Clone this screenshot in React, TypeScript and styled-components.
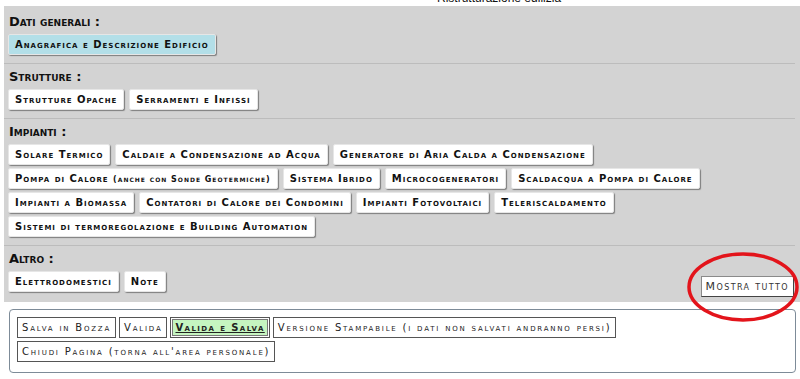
import styled, { createGlobalStyle } from 'styled-components'

const GlobalStyle = createGlobalStyle`
    html, body {
        margin: 0;
        padding: 0;
        background: #ffffff;
        font-family: Verdana, "DejaVu Sans", sans-serif;
    }
`

const Page = styled.div`
    position: relative;
    width: 800px;
    height: 379px;
    overflow: hidden;
`

const TitleStrip = styled.div`
    height: 6px;
    overflow: hidden;
    padding-left: 437px;
`

const TitleText = styled.div`
    margin-top: -8px;
    font-family: "Liberation Sans", Arial, sans-serif;
    font-size: 12px;
    line-height: 13px;
    color: #111;
`

const Panel = styled.div`
    margin-left: 4px;
    background: #d3d3d3;
`

const Section = styled.div`
    margin-right: 5px;
    border-top: ${p => (p.$first ? 'none' : '1px solid #bcbcbc')};
    padding: ${p => (p.$first ? '8px' : '5px')} 0 ${p => (p.$last ? '5px' : '8px')} 4px;
    display: flex;
    flex-direction: column;
    gap: 5px;
`

const Heading = styled.div`
    font-weight: bold;
    font-variant: small-caps;
    font-size: 13px;
    line-height: 15px;
    color: #111;
    padding-left: 1px;
`

const Buttons = styled.div`
    display: flex;
    flex-wrap: wrap;
    align-items: flex-start;
    gap: 3px 5px;
`

const NavButton = styled.button`
    height: 21px;
    padding: 0 6px;
    border: 1px solid #e6e6e6;
    border-radius: 2px;
    background: ${p => (p.$active ? '#b3dfe8' : '#ffffff')};
    box-shadow: 1px 1px 1px #7e7e7e;
    font-family: Verdana, "DejaVu Sans", sans-serif;
    font-weight: bold;
    font-variant: small-caps;
    font-size: 10px;
    letter-spacing: 1px;
    color: #111;
    cursor: pointer;
    white-space: nowrap;
`

const Small = styled.span`
    font-size: 8px;
`

const AltroRow = styled.div`
    display: flex;
    justify-content: space-between;
    align-items: flex-start;
`

const ShowAll = styled.button`
    margin-top: 5px;
    margin-right: 1px;
    height: 21px;
    padding: 0 4px;
    background: #ffffff;
    border: 1px solid #8a8a8a;
    border-right-color: #444;
    border-bottom-color: #444;
    font-family: Verdana, "DejaVu Sans", sans-serif;
    font-variant: small-caps;
    font-size: 11px;
    letter-spacing: 1.4px;
    color: #333;
`

const Highlight = styled.svg`
    position: absolute;
    left: 686px;
    top: 251px;
    width: 114px;
    height: 72px;
    pointer-events: none;
`

const ActionBox = styled.div`
    margin: 7px 4px 0 9px;
    height: 48px;
    padding: 7px 7px;
    border: 1px solid #7d8b98;
    border-radius: 4px;
    background: #ffffff;
    display: flex;
    flex-wrap: wrap;
    align-content: flex-start;
    gap: 3px 3px;
`

const ActionButton = styled.button`
    height: 21px;
    padding: 0 4px;
    background: ${p => (p.$primary ? '#c5f5c0' : '#ffffff')};
    border: 1px solid #555;
    box-shadow: ${p => (p.$primary ? 'inset 0 0 0 1px #ffffff, inset 0 0 0 2px #777' : 'none')};
    font-family: Verdana, "DejaVu Sans", sans-serif;
    font-variant: small-caps;
    font-weight: ${p => (p.$primary ? 'bold' : 'normal')};
    text-decoration: ${p => (p.$primary ? 'underline' : 'none')};
    font-size: 10px;
    letter-spacing: ${p => (p.$primary ? '1.4px' : '1.8px')};
    color: #222;
    white-space: nowrap;
`

const App = () => {
    return (
        <Page>
            <GlobalStyle />
            <TitleStrip>
                <TitleText>Ristrutturazione edilizia</TitleText>
            </TitleStrip>
            <Panel>
                <Section $first>
                    <Heading>Dati generali :</Heading>
                    <Buttons>
                        <NavButton $active>Anagrafica e Descrizione Edificio</NavButton>
                    </Buttons>
                </Section>
                <Section>
                    <Heading>Strutture :</Heading>
                    <Buttons>
                        <NavButton>Strutture Opache</NavButton>
                        <NavButton>Serramenti e Infissi</NavButton>
                    </Buttons>
                </Section>
                <Section>
                    <Heading>Impianti :</Heading>
                    <Buttons>
                        <NavButton>Solare Termico</NavButton>
                        <NavButton>Caldaie a Condensazione ad Acqua</NavButton>
                        <NavButton>Generatore di Aria Calda a Condensazione</NavButton>
                        <NavButton>Pompa di Calore <Small>(anche con Sonde Geotermiche)</Small></NavButton>
                        <NavButton>Sistema Ibrido</NavButton>
                        <NavButton>Microcogeneratori</NavButton>
                        <NavButton>Scaldacqua a Pompa di Calore</NavButton>
                        <NavButton>Impianti a Biomassa</NavButton>
                        <NavButton>Contatori di Calore dei Condomini</NavButton>
                        <NavButton>Impianti Fotovoltaici</NavButton>
                        <NavButton>Teleriscaldamento</NavButton>
                        <NavButton>Sistemi di termoregolazione e Building Automation</NavButton>
                    </Buttons>
                </Section>
                <Section $last>
                    <Heading>Altro :</Heading>
                    <AltroRow>
                        <Buttons>
                            <NavButton>Elettrodomestici</NavButton>
                            <NavButton>Note</NavButton>
                        </Buttons>
                        <ShowAll>Mostra tutto</ShowAll>
                    </AltroRow>
                </Section>
            </Panel>
            <ActionBox>
                <ActionButton>Salva in Bozza</ActionButton>
                <ActionButton>Valida</ActionButton>
                <ActionButton $primary>Valida e Salva</ActionButton>
                <ActionButton>Versione Stampabile (i dati non salvati andranno persi)</ActionButton>
                <ActionButton>Chiudi Pagina (torna all'area personale)</ActionButton>
            </ActionBox>
            <Highlight viewBox="0 0 114 72">
                <ellipse cx="57" cy="36" rx="54" ry="33" fill="none" stroke="#e3141b" strokeWidth="3.5" />
            </Highlight>
        </Page>
    )
}

export default App
